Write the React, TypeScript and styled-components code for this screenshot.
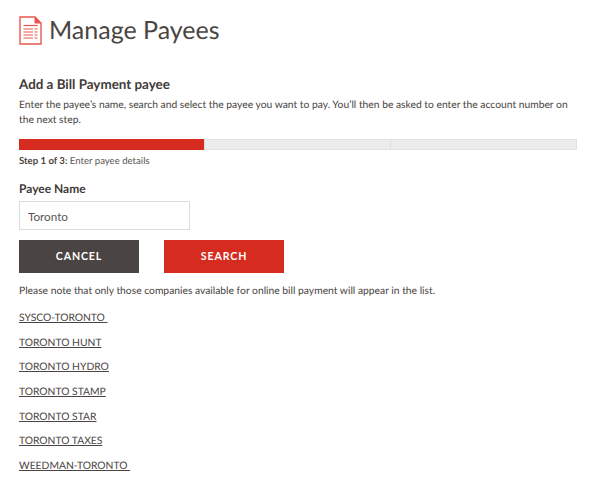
import React from "react";
import styled, { createGlobalStyle } from "styled-components";

const payees = [
  "SYSCO-TORONTO ",
  "TORONTO HUNT",
  "TORONTO HYDRO",
  "TORONTO STAMP",
  "TORONTO STAR",
  "TORONTO TAXES",
  "WEEDMAN-TORONTO ",
];

const GlobalStyle = createGlobalStyle`
  body {
    margin: 0;
    background: #fff;
    font-family: Lato, "Liberation Sans", sans-serif;
    color: #4a4542;
    text-rendering: geometricPrecision;
  }
`;

const Page = styled.div`
  width: 558px;
  height: 491px;
  padding: 0 23px 0 19px;
  overflow: hidden;
`;

const Header = styled.header`
  display: flex;
  align-items: center;
  gap: 7px;
  padding-top: 15px;
  height: 30px;
  margin-bottom: 30px;
`;

const Title = styled.h1`
  margin: 0;
  font-size: 25px;
  font-weight: 400;
  line-height: 30px;
  color: #4a4542;
`;

const Subtitle = styled.h2`
  margin: 0 0 5px;
  font-size: 13.4px;
  font-weight: 700;
  line-height: 18px;
  color: #3f3b38;
`;

const Intro = styled.p`
  margin: 0 0 11px;
  font-size: 10.3px;
  line-height: 15px;
  color: #4a4542;
`;

const Progress = styled.div`
  display: grid;
  grid-template-columns: repeat(3, 1fr);
  height: 9px;
  background: #ececec;
  border: 1px solid #e0e0e0;
`;

const Segment = styled.div<{ $active?: boolean }>`
  background: ${(p) => (p.$active ? "#d62b1f" : "transparent")};
  margin: ${(p) => (p.$active ? "-1px 0 -1px -1px" : "0")};
  border-right: 1px solid #dcdcdc;
  &:last-child {
    border-right: 0;
  }
`;

const StepText = styled.p`
  margin: 5px 0 12px;
  font-size: 9.6px;
  line-height: 14px;
  color: #5a5552;
  strong {
    font-weight: 700;
    color: #4a4542;
  }
`;

const Label = styled.label`
  display: block;
  font-size: 12px;
  font-weight: 700;
  line-height: 16px;
  margin-bottom: 4px;
  color: #3f3b38;
`;

const Input = styled.input`
  display: block;
  box-sizing: border-box;
  width: 171px;
  height: 29px;
  padding: 0 8px;
  border: 1px solid #dcdcdc;
  font-family: inherit;
  font-size: 11.7px;
  color: #5a5552;
  outline: none;
`;

const Buttons = styled.div`
  display: flex;
  gap: 25px;
  margin-top: 10px;
`;

const Button = styled.button<{ $primary?: boolean }>`
  width: 120px;
  height: 33px;
  padding: 0 0 1px;
  border: 0;
  background: ${(p) => (p.$primary ? "#d62b1f" : "#4a4542")};
  color: #fff;
  font-family: inherit;
  font-size: 10.6px;
  font-weight: 700;
  letter-spacing: 0.9px;
`;

const Note = styled.p`
  margin: 11px 0 13px;
  font-size: 10.3px;
  line-height: 14px;
  color: #4a4542;
`;

const List = styled.ul`
  list-style: none;
  margin: 0;
  padding: 0;
`;

const Item = styled.li`
  height: 24.7px;
  font-size: 10.3px;
  line-height: 15px;
  white-space: pre;
`;

const PayeeLink = styled.a`
  color: #4a4542;
  text-decoration: underline;
`;

const DocIcon = () => (
  <svg width="23" height="29" viewBox="0 0 23 29" fill="none" stroke="#e8574e">
    <path d="M1 1H16L22 7V28H1Z" strokeWidth="1.4" />
    <path d="M16 1V7H22" fill="#e8574e" strokeWidth="1" />
    <path d="M4.5 9.5H18.5" strokeWidth="1.2" />
    <path d="M4.5 13H14M15.5 13H18.5M4.5 16H14M15.5 16H18.5M4.5 19H14M15.5 19H18.5M4.5 22H14M15.5 22H18.5" strokeWidth="1.1" />
  </svg>
);

export default function App() {
  return (
    <Page>
      <GlobalStyle />
      <Header>
        <DocIcon />
        <Title>Manage Payees</Title>
      </Header>
      <Subtitle>Add a Bill Payment payee</Subtitle>
      <Intro>
        Enter the payee’s name, search and select the payee you want to pay. You’ll then be asked to enter the account number on the next step.
      </Intro>
      <Progress>
        <Segment $active />
        <Segment />
        <Segment />
      </Progress>
      <StepText>
        <strong>Step 1 of 3:</strong> Enter payee details
      </StepText>
      <Label htmlFor="payee">Payee Name</Label>
      <Input id="payee" defaultValue="Toronto" />
      <Buttons>
        <Button>CANCEL</Button>
        <Button $primary>SEARCH</Button>
      </Buttons>
      <Note>Please note that only those companies available for online bill payment will appear in the list.</Note>
      <List>
        {payees.map((name) => (
          <Item key={name}>
            <PayeeLink href="#">{name}</PayeeLink>
          </Item>
        ))}
      </List>
    </Page>
  );
}
